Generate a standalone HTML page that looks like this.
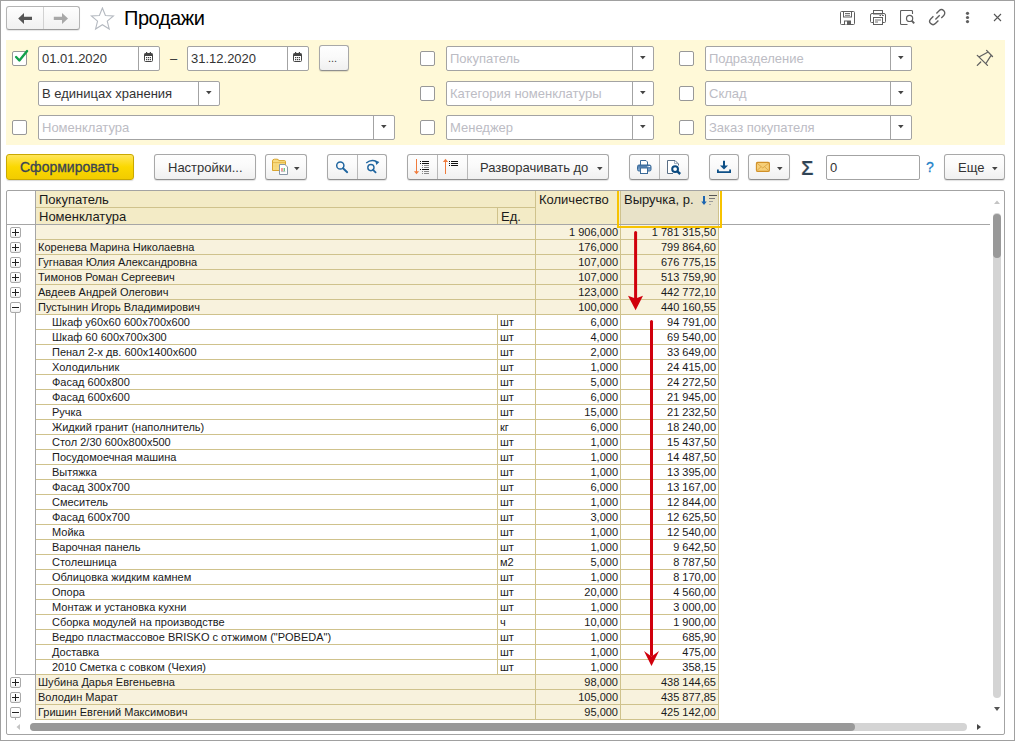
<!DOCTYPE html><html><head><meta charset="utf-8"><title>Продажи</title><style>
*{box-sizing:border-box;margin:0;padding:0}
html,body{width:1015px;height:741px;overflow:hidden;background:#fff}
body{position:relative;font-family:"Liberation Sans",sans-serif}
body>div,body>svg{position:absolute}
.t{overflow:visible}
.fld{background:#fff;border:1px solid #a3a3a3;border-radius:2px}
.chk{background:#fff;border:1px solid #989898;border-radius:2px}
.btn{background:linear-gradient(#fefefe,#fafafa 45%,#f0f0f0);border:1px solid #a8a8a8;border-bottom-color:#8f8f8f;border-radius:3px;box-shadow:0 1px 1px rgba(0,0,0,.12)}
.dd{border-left:1px solid #a3a3a3}
</style></head><body>
<div style="left:0px;top:0px;width:1015px;height:741px;border:1px solid #a0a0a0;"></div>
<div style="left:6px;top:6px;width:74px;height:24px;background:linear-gradient(#fefefe,#f1f1f1);border:1px solid #b4b4b4;border-bottom-color:#9c9c9c;border-radius:3px;box-shadow:0 1px 1px rgba(0,0,0,.1);"></div>
<div style="left:43px;top:7px;width:1px;height:22px;background:#d2d2d2;"></div>
<svg style="left:17px;top:12px" width="16" height="12" viewBox="0 0 16 12"><path d="M1.2 6.4 L7 1 V4.8 H15 V8 H7 V11.9 Z" fill="#555"/></svg>
<svg style="left:53px;top:12px" width="16" height="12" viewBox="0 0 16 12"><path d="M15 6.4 L9 1 V4.8 H0.8 V8 H9 V11.9 Z" fill="#a8a8a8"/></svg>
<svg style="left:90px;top:7px" width="25" height="24" viewBox="0 0 25 24"><path d="M12.40 1.00 L15.40 8.47 L23.43 9.02 L17.25 14.18 L19.22 21.98 L12.40 17.70 L5.58 21.98 L7.55 14.18 L1.37 9.02 L9.40 8.47 Z" fill="none" stroke="#b4b9c0" stroke-width="1.1" stroke-linejoin="miter"/></svg>
<div class="t" style="left:124px;top:8px;font-size:20px;line-height:20px;color:#000;font-weight:normal;white-space:pre;letter-spacing:-0.45px;">Продажи</div>
<svg style="left:840px;top:11px" width="15" height="15" viewBox="0 0 15 15"><path d="M1.5 0.5 H13.5 Q14.5 0.5 14.5 1.5 V12.5 Q14.5 13.5 13.5 13.5 H1.5 Q0.5 13.5 0.5 12.5 V1.5 Q0.5 0.5 1.5 0.5 Z" fill="none" stroke="#5f5f5f" stroke-width="1"/><rect x="3.5" y="0.5" width="8" height="5.5" fill="none" stroke="#5f5f5f"/><path d="M5 2.5 H10 M5 4.3 H10" stroke="#5f5f5f" stroke-width="0.9"/><rect x="4" y="9.5" width="7" height="4" fill="#5f5f5f"/><rect x="5" y="10.5" width="2" height="3" fill="#fff"/></svg>
<svg style="left:870px;top:10px" width="16" height="16" viewBox="0 0 16 16"><rect x="3.5" y="0.5" width="9" height="3.5" fill="none" stroke="#5f5f5f"/><path d="M3 12.5 H1.5 Q0.5 12.5 0.5 11.5 V5 Q0.5 3.5 2 3.5 H14 Q15.5 3.5 15.5 5 V11.5 Q15.5 12.5 14.5 12.5 H13" fill="none" stroke="#5f5f5f"/><rect x="3.5" y="7.5" width="9" height="7" fill="#fff" stroke="#5f5f5f"/><path d="M5 10 H11 M5 12 H8" stroke="#5f5f5f" stroke-width="0.9"/><path d="M9.5 5.5 H11 M12 5.5 H13.8" stroke="#5f5f5f" stroke-width="1.1"/></svg>
<svg style="left:900px;top:10px" width="16" height="16" viewBox="0 0 16 16"><path d="M7.5 14.5 H1.5 Q0.5 14.5 0.5 13.5 V1.5 Q0.5 0.5 1.5 0.5 H11.5 Q12.5 0.5 12.5 1.5 V4" fill="none" stroke="#5f5f5f" stroke-width="1.1"/><circle cx="9.6" cy="8.4" r="3.1" fill="none" stroke="#5f5f5f" stroke-width="1.2"/><path d="M11.7 10.6 L14.2 13.4" stroke="#5f5f5f" stroke-width="1.9"/></svg>
<svg style="left:926px;top:6px" width="24" height="22" viewBox="0 0 24 22"><path d="M10.4 7.4 L13.1 4.7 A3.32 3.32 0 0 1 17.8 9.4 L15.3 11.9 M13.7 9.2 L9.4 13.5 M7.4 10.2 L4.7 12.9 A3.32 3.32 0 0 0 9.4 17.6 L12.4 14.6" fill="none" stroke="#5f5f5f" stroke-width="1.35"/></svg>
<svg style="left:965px;top:11px" width="5" height="13" viewBox="0 0 5 13"><circle cx="2.5" cy="2.3" r="1.6" fill="#5f5f5f"/><circle cx="2.5" cy="6.5" r="1.6" fill="#5f5f5f"/><circle cx="2.5" cy="10.6" r="1.6" fill="#5f5f5f"/></svg>
<svg style="left:993px;top:13px" width="9" height="9" viewBox="0 0 9 9"><path d="M1 1 L8 8 M8 1 L1 8" stroke="#555" stroke-width="1.1"/></svg>
<div style="left:6px;top:40px;width:999px;height:105px;background:#fff9d8;"></div>
<div class="chk" style="left:12px;top:51px;width:15px;height:15px;"></div>
<svg style="left:12px;top:47px" width="20" height="20" viewBox="0 0 20 20"><path d="M4.1 10 L7.4 13.5 L15.1 4.1" fill="none" stroke="#12a04a" stroke-width="2.4" stroke-linecap="round" stroke-linejoin="round"/></svg>
<div class="fld" style="left:38px;top:46px;width:122px;height:25px"></div>
<div style="left:138px;top:47px;width:1px;height:23px;background:#a3a3a3;"></div>
<svg style="left:144px;top:52px" width="9" height="10" viewBox="0 0 9 10"><rect x="0.5" y="1.5" width="8" height="8" rx="1" fill="none" stroke="#444"/><rect x="0.5" y="1.5" width="8" height="2.5" fill="#444"/><rect x="2" y="0" width="1.2" height="2.2" fill="#444"/><rect x="5.8" y="0" width="1.2" height="2.2" fill="#444"/><g fill="#444"><rect x="2" y="5" width="1.2" height="1.2"/><rect x="3.9" y="5" width="1.2" height="1.2"/><rect x="5.8" y="5" width="1.2" height="1.2"/><rect x="2" y="7" width="1.2" height="1.2"/><rect x="3.9" y="7" width="1.2" height="1.2"/><rect x="5.8" y="7" width="1.2" height="1.2"/></g></svg>
<div class="t" style="left:42px;top:52px;font-size:13px;line-height:13px;color:#333;font-weight:normal;white-space:pre;">01.01.2020</div>
<div class="t" style="left:170px;top:52px;font-size:13px;line-height:13px;color:#333;font-weight:normal;white-space:pre;">–</div>
<div class="fld" style="left:187px;top:46px;width:122px;height:25px"></div>
<div style="left:287px;top:47px;width:1px;height:23px;background:#a3a3a3;"></div>
<svg style="left:293px;top:52px" width="9" height="10" viewBox="0 0 9 10"><rect x="0.5" y="1.5" width="8" height="8" rx="1" fill="none" stroke="#444"/><rect x="0.5" y="1.5" width="8" height="2.5" fill="#444"/><rect x="2" y="0" width="1.2" height="2.2" fill="#444"/><rect x="5.8" y="0" width="1.2" height="2.2" fill="#444"/><g fill="#444"><rect x="2" y="5" width="1.2" height="1.2"/><rect x="3.9" y="5" width="1.2" height="1.2"/><rect x="5.8" y="5" width="1.2" height="1.2"/><rect x="2" y="7" width="1.2" height="1.2"/><rect x="3.9" y="7" width="1.2" height="1.2"/><rect x="5.8" y="7" width="1.2" height="1.2"/></g></svg>
<div class="t" style="left:191px;top:52px;font-size:13px;line-height:13px;color:#333;font-weight:normal;white-space:pre;">31.12.2020</div>
<div class="btn" style="left:319px;top:45px;width:30px;height:26px"></div>
<div class="t" style="left:328px;top:53px;font-size:11px;line-height:11px;color:#444;font-weight:normal;white-space:pre;">...</div>
<div class="fld" style="left:38px;top:81px;width:182px;height:25px"></div>
<div style="left:198px;top:82px;width:1px;height:23px;background:#a3a3a3;"></div>
<svg style="left:206px;top:91px" width="6" height="4" viewBox="0 0 6 4"><path d="M0 0 H5.6 L2.8 3.3 Z" fill="#444"/></svg>
<div class="t" style="left:42px;top:87px;font-size:13px;line-height:13px;color:#333;font-weight:normal;white-space:pre;">В единицах хранения</div>
<div class="chk" style="left:12px;top:120px;width:15px;height:15px;"></div>
<div class="fld" style="left:38px;top:115px;width:357px;height:25px"></div>
<div style="left:373px;top:116px;width:1px;height:23px;background:#a3a3a3;"></div>
<svg style="left:381px;top:125px" width="6" height="4" viewBox="0 0 6 4"><path d="M0 0 H5.6 L2.8 3.3 Z" fill="#444"/></svg>
<div class="t" style="left:42px;top:121px;font-size:13px;line-height:13px;color:#bcbcc4;font-weight:normal;white-space:pre;">Номенклатура</div>
<div class="chk" style="left:420px;top:51px;width:15px;height:15px;"></div>
<div class="fld" style="left:446px;top:46px;width:208px;height:25px"></div>
<div style="left:632px;top:47px;width:1px;height:23px;background:#a3a3a3;"></div>
<svg style="left:640px;top:56px" width="6" height="4" viewBox="0 0 6 4"><path d="M0 0 H5.6 L2.8 3.3 Z" fill="#444"/></svg>
<div class="t" style="left:450px;top:52px;font-size:13px;line-height:13px;color:#bcbcc4;font-weight:normal;white-space:pre;">Покупатель</div>
<div class="chk" style="left:420px;top:86px;width:15px;height:15px;"></div>
<div class="fld" style="left:446px;top:81px;width:208px;height:25px"></div>
<div style="left:632px;top:82px;width:1px;height:23px;background:#a3a3a3;"></div>
<svg style="left:640px;top:91px" width="6" height="4" viewBox="0 0 6 4"><path d="M0 0 H5.6 L2.8 3.3 Z" fill="#444"/></svg>
<div class="t" style="left:450px;top:87px;font-size:13px;line-height:13px;color:#bcbcc4;font-weight:normal;white-space:pre;">Категория номенклатуры</div>
<div class="chk" style="left:420px;top:120px;width:15px;height:15px;"></div>
<div class="fld" style="left:446px;top:115px;width:208px;height:25px"></div>
<div style="left:632px;top:116px;width:1px;height:23px;background:#a3a3a3;"></div>
<svg style="left:640px;top:125px" width="6" height="4" viewBox="0 0 6 4"><path d="M0 0 H5.6 L2.8 3.3 Z" fill="#444"/></svg>
<div class="t" style="left:450px;top:121px;font-size:13px;line-height:13px;color:#bcbcc4;font-weight:normal;white-space:pre;">Менеджер</div>
<div class="chk" style="left:679px;top:51px;width:15px;height:15px;"></div>
<div class="fld" style="left:705px;top:46px;width:207px;height:25px"></div>
<div style="left:890px;top:47px;width:1px;height:23px;background:#a3a3a3;"></div>
<svg style="left:898px;top:56px" width="6" height="4" viewBox="0 0 6 4"><path d="M0 0 H5.6 L2.8 3.3 Z" fill="#444"/></svg>
<div class="t" style="left:709px;top:52px;font-size:13px;line-height:13px;color:#bcbcc4;font-weight:normal;white-space:pre;">Подразделение</div>
<div class="chk" style="left:679px;top:86px;width:15px;height:15px;"></div>
<div class="fld" style="left:705px;top:81px;width:207px;height:25px"></div>
<div style="left:890px;top:82px;width:1px;height:23px;background:#a3a3a3;"></div>
<svg style="left:898px;top:91px" width="6" height="4" viewBox="0 0 6 4"><path d="M0 0 H5.6 L2.8 3.3 Z" fill="#444"/></svg>
<div class="t" style="left:709px;top:87px;font-size:13px;line-height:13px;color:#bcbcc4;font-weight:normal;white-space:pre;">Склад</div>
<div class="chk" style="left:679px;top:120px;width:15px;height:15px;"></div>
<div class="fld" style="left:705px;top:115px;width:207px;height:25px"></div>
<div style="left:890px;top:116px;width:1px;height:23px;background:#a3a3a3;"></div>
<svg style="left:898px;top:125px" width="6" height="4" viewBox="0 0 6 4"><path d="M0 0 H5.6 L2.8 3.3 Z" fill="#444"/></svg>
<div class="t" style="left:709px;top:121px;font-size:13px;line-height:13px;color:#bcbcc4;font-weight:normal;white-space:pre;">Заказ покупателя</div>
<svg style="left:972px;top:46px" width="26" height="24" viewBox="0 0 26 24"><path d="M14.6 4.4 L20.5 10.5 M5.3 9.4 L15.5 19.4 M7.4 10.7 L15.2 6.5 M19.1 9.4 L13.9 17.5 M8.7 16 L5.3 19.4" fill="none" stroke="#616161" stroke-width="1.3" stroke-linecap="round"/></svg>
<div style="left:6px;top:154px;width:128px;height:26px;background:linear-gradient(#ffe55a,#fbd800 50%,#f2cc00);border:1px solid #c9a800;border-radius:3px;box-shadow:0 1px 1px rgba(0,0,0,.15)"></div>
<div class="t" style="left:20px;top:160px;font-size:14px;line-height:14px;color:#3a4454;font-weight:normal;white-space:pre;-webkit-text-stroke:0.3px #3a4454;">Сформировать</div>
<div class="btn" style="left:154px;top:154px;width:102px;height:26px"></div>
<div class="t" style="left:168px;top:161px;font-size:13px;line-height:13px;color:#333;font-weight:normal;white-space:pre;">Настройки...</div>
<div class="btn" style="left:265px;top:154px;width:42px;height:26px"></div>
<svg style="left:271px;top:158px" width="18" height="18" viewBox="0 0 18 18"><path d="M1.5 3 Q1.5 1.2 3.5 1.2 H6 Q7.6 1.2 7.8 2.6 H13.5 Q14.5 2.6 14.5 3.6 V12.5 H1.5 Z" fill="#f8dc80" stroke="#d9a530"/><path d="M1.8 4.6 H14.2" stroke="#e3b448" stroke-width=".9"/><path d="M2 8 H14 M5 5 V12 M9 5 V12" stroke="#f0cd70" stroke-width=".5"/><path d="M8.5 6.5 H14 L16.5 9 V16.5 H8.5 Z" fill="#fff" stroke="#8797a6"/><rect x="10.5" y="10" width="1" height="3.2" fill="#e83a3a"/><rect x="12.7" y="10" width="1" height="3.2" fill="#2fb04a"/><path d="M10 13.6 H14.3" stroke="#9a9a9a" stroke-width=".6"/></svg>
<svg style="left:294px;top:167px" width="6" height="4" viewBox="0 0 6 4"><path d="M0 0 H5.6 L2.8 3.3 Z" fill="#444"/></svg>
<div class="btn" style="left:327px;top:154px;width:60px;height:26px"></div>
<div style="left:357px;top:155px;width:1px;height:24px;background:#b8b8b8;"></div>
<svg style="left:335px;top:160px" width="14" height="14" viewBox="0 0 14 14"><circle cx="5.3" cy="5.5" r="3.6" fill="none" stroke="#2066a0" stroke-width="1.5"/><path d="M8 8.2 L12.2 12.2" stroke="#2066a0" stroke-width="1.9" stroke-linecap="round"/></svg>
<svg style="left:365px;top:159px" width="16" height="15" viewBox="0 0 16 15"><path d="M1.2 4 Q6.5 -0.2 11.6 2.8" fill="none" stroke="#2066a0" stroke-width="1.4"/><path d="M10.2 1.3 L14.4 3.1 L11.3 6 Z" fill="#2066a0"/><circle cx="5.9" cy="8.6" r="3.1" fill="none" stroke="#2066a0" stroke-width="1.4"/><path d="M8 10.8 L10.6 13.4" stroke="#2066a0" stroke-width="1.8" stroke-linecap="round"/></svg>
<div class="btn" style="left:407px;top:154px;width:202px;height:26px"></div>
<div style="left:437px;top:155px;width:1px;height:24px;background:#b8b8b8;"></div>
<div style="left:467px;top:155px;width:1px;height:24px;background:#b8b8b8;"></div>
<svg style="left:410px;top:156px" width="24" height="22" viewBox="0 0 24 22"><rect x="6" y="3" width="1" height="13" fill="#f07b3c"/><path d="M3.9 15.2 L9.1 15.2 L6.5 18.3 Z" fill="#f07b3c"/><g fill="#111"><rect x="10" y="5" width="1" height="1"/><rect x="12" y="5" width="7" height="1"/><rect x="10" y="7" width="1" height="1"/><rect x="12" y="7" width="7" height="1"/><rect x="10" y="13" width="1" height="1"/><rect x="12" y="13" width="7" height="1"/></g><g fill="#888"><rect x="12" y="9" width="1" height="1"/><rect x="14" y="9" width="5" height="1"/><rect x="12" y="11" width="1" height="1"/><rect x="14" y="11" width="5" height="1"/><rect x="12" y="15" width="1" height="1"/><rect x="14" y="15" width="5" height="1"/><rect x="12" y="17" width="1" height="1"/><rect x="14" y="17" width="5" height="1"/></g></svg>
<svg style="left:438px;top:156px" width="24" height="22" viewBox="0 0 24 22"><rect x="7" y="5.5" width="1" height="12.5" fill="#f07b3c"/><path d="M4.9 5.9 H10.1 L7.5 2.8 Z" fill="#f07b3c"/><g fill="#111"><rect x="11" y="5" width="1" height="1"/><rect x="13" y="5" width="7" height="1"/><rect x="11" y="7" width="1" height="1"/><rect x="13" y="7" width="7" height="1"/><rect x="11" y="9" width="1" height="1"/><rect x="13" y="9" width="7" height="1"/></g></svg>
<div class="t" style="left:480px;top:161px;font-size:13px;line-height:13px;color:#333;font-weight:normal;white-space:pre;">Разворачивать до</div>
<svg style="left:597px;top:167px" width="6" height="4" viewBox="0 0 6 4"><path d="M0 0 H5.6 L2.8 3.3 Z" fill="#444"/></svg>
<div class="btn" style="left:629px;top:154px;width:60px;height:26px"></div>
<div style="left:659px;top:155px;width:1px;height:24px;background:#b8b8b8;"></div>
<svg style="left:637px;top:159px" width="16" height="16" viewBox="0 0 16 16"><defs><linearGradient id="pg" x1="0" y1="0" x2="0" y2="1"><stop offset="0" stop-color="#3f70a4"/><stop offset="1" stop-color="#8db2d8"/></linearGradient></defs><path d="M3.5 6 V1.5 H9 L10.5 3 V6" fill="#fff" stroke="#3a6a98"/><rect x="0.5" y="6" width="13.5" height="6" rx="1.5" fill="url(#pg)" stroke="#3a6a98"/><rect x="3.5" y="9" width="7" height="5.5" fill="#fff" stroke="#3a6a98"/><rect x="10.6" y="7" width="1.1" height="1" fill="#fff"/><rect x="12" y="7" width="1.1" height="1" fill="#fff"/></svg>
<svg style="left:666px;top:159px" width="17" height="17" viewBox="0 0 17 17"><path d="M7 14.5 H1.5 V1.5 H9 L12.5 5 V6.5" fill="#fff" stroke="#5a6f86"/><path d="M8.5 2 V4.6 H12" fill="none" stroke="#8a9bb0" stroke-width=".8"/><circle cx="9.1" cy="10.1" r="2.9" fill="#fff" stroke="#0a4a80" stroke-width="2"/><path d="M11.1 12.2 L14.2 15" stroke="#0a4a80" stroke-width="2.4"/></svg>
<div class="btn" style="left:709px;top:154px;width:30px;height:26px"></div>
<svg style="left:716px;top:160px" width="16" height="14" viewBox="0 0 16 14"><path d="M8 0.8 V7" stroke="#0d4f86" stroke-width="2"/><path d="M4 5.6 H12 L8 9.6 Z" fill="#0d4f86"/><path d="M1.9 9.6 V12.1 H14.1 V9.6" fill="none" stroke="#0d4f86" stroke-width="1.8"/></svg>
<div class="btn" style="left:748px;top:154px;width:42px;height:26px"></div>
<svg style="left:755px;top:161px" width="16" height="12" viewBox="0 0 16 12"><rect x="1.4" y="1.4" width="13" height="9" rx="1.2" fill="#f6cf78" stroke="#d09028" stroke-width="1.1"/><path d="M1.2 1.5 L7.8 7 L14.4 1.5 M1.2 10.2 L6 5.8 M14.4 10.2 L9.6 5.8" fill="none" stroke="#d8a040" stroke-width=".8"/></svg>
<svg style="left:777px;top:167px" width="6" height="4" viewBox="0 0 6 4"><path d="M0 0 H5.6 L2.8 3.3 Z" fill="#444"/></svg>
<div class="t" style="left:801px;top:157px;font-size:21px;line-height:21px;color:#2f4355;font-weight:bold;white-space:pre;-webkit-text-stroke:0.2px #fff;">Σ</div>
<div class="fld" style="left:826px;top:155px;width:94px;height:25px"></div>
<div class="t" style="left:830px;top:161px;font-size:13px;line-height:13px;color:#333;font-weight:normal;white-space:pre;">0</div>
<div class="t" style="left:926px;top:160px;font-size:14px;line-height:14px;color:#2382c8;font-weight:normal;white-space:pre;-webkit-text-stroke:0.3px #2382c8;">?</div>
<div class="btn" style="left:944px;top:154px;width:61px;height:26px"></div>
<div class="t" style="left:958px;top:161px;font-size:13px;line-height:13px;color:#333;font-weight:normal;white-space:pre;">Еще</div>
<svg style="left:992px;top:167px" width="6" height="4" viewBox="0 0 6 4"><path d="M0 0 H5.6 L2.8 3.3 Z" fill="#444"/></svg>
<div style="left:6px;top:190px;width:999px;height:545px;border:1px solid #a3a3a3;border-radius:2px;"></div>
<div style="left:36px;top:191px;width:499px;height:33px;background:#f3ebc6;"></div>
<div style="left:536px;top:191px;width:84px;height:33px;background:#f3ebc6;"></div>
<div style="left:621px;top:191px;width:97px;height:33px;background:#e8e2c8;"></div>
<div style="left:36px;top:207px;width:499px;height:1px;background:#cfc28c;"></div>
<div style="left:497px;top:208px;width:1px;height:16px;background:#cfc28c;"></div>
<div style="left:535px;top:191px;width:1px;height:34px;background:#cfc28c;"></div>
<div style="left:620px;top:191px;width:1px;height:34px;background:#cfc28c;"></div>
<div style="left:718px;top:191px;width:1px;height:34px;background:#cfc28c;"></div>
<div class="t" style="left:39px;top:193px;font-size:13px;line-height:13px;color:#1a1a1a;font-weight:normal;white-space:pre;">Покупатель</div>
<div class="t" style="left:39px;top:210px;font-size:13px;line-height:13px;color:#1a1a1a;font-weight:normal;white-space:pre;">Номенклатура</div>
<div class="t" style="left:501px;top:210px;font-size:13px;line-height:13px;color:#1a1a1a;font-weight:normal;white-space:pre;">Ед.</div>
<div class="t" style="left:539px;top:193px;font-size:13px;line-height:13px;color:#1a1a1a;font-weight:normal;white-space:pre;">Количество</div>
<div class="t" style="left:624px;top:193px;font-size:13px;line-height:13px;color:#1a1a1a;font-weight:normal;white-space:pre;">Выручка, р.</div>
<svg style="left:700px;top:194px" width="18" height="12" viewBox="0 0 18 12"><path d="M4 2 V8" stroke="#1b64b0" stroke-width="2"/><path d="M1.3 7.6 H6.7 L4 11 Z" fill="#1b64b0"/><rect x="9" y="1" width="8" height="1" fill="#555"/><rect x="9" y="4" width="6" height="1" fill="#777"/><rect x="9" y="7" width="4" height="1" fill="#999"/><rect x="9" y="10" width="2" height="1" fill="#aaa"/></svg>
<div style="left:7px;top:224px;width:983px;height:1px;background:#a6a6a6;"></div>
<div style="left:35px;top:191px;width:1px;height:529px;background:#a6a6a6;"></div>
<div style="left:36px;top:225px;width:682px;height:14px;background:#f8f2dd;"></div>
<div style="left:36px;top:239px;width:683px;height:1px;background:#cfc28c;"></div>
<div style="left:535px;top:225px;width:1px;height:14px;background:#cfc28c;"></div>
<div style="left:620px;top:225px;width:1px;height:14px;background:#cfc28c;"></div>
<div style="left:718px;top:225px;width:1px;height:14px;background:#cfc28c;"></div>
<div style="left:10px;top:227px;width:11px;height:11px;border:1px solid #a9a9a9;border-radius:2px;background:linear-gradient(#fff 60%,#eee)"></div>
<div style="left:12px;top:232px;width:7px;height:1px;background:#222;"></div>
<div style="left:15px;top:229px;width:1px;height:7px;background:#222;"></div>
<div class="t" style="left:538px;top:227px;width:80px;text-align:right;font-size:11px;line-height:11px;color:#1a1a1a;font-weight:normal;white-space:pre;">1 906,000</div>
<div class="t" style="left:621px;top:227px;width:95px;text-align:right;font-size:11px;line-height:11px;color:#1a1a1a;font-weight:normal;white-space:pre;">1 781 315,50</div>
<div style="left:36px;top:240px;width:682px;height:14px;background:#f8f2dd;"></div>
<div style="left:36px;top:254px;width:683px;height:1px;background:#cfc28c;"></div>
<div style="left:535px;top:240px;width:1px;height:14px;background:#cfc28c;"></div>
<div style="left:620px;top:240px;width:1px;height:14px;background:#cfc28c;"></div>
<div style="left:718px;top:240px;width:1px;height:14px;background:#cfc28c;"></div>
<div class="t" style="left:38px;top:242px;font-size:11px;line-height:11px;color:#1a1a1a;font-weight:normal;white-space:pre;">Коренева Марина Николаевна</div>
<div style="left:10px;top:242px;width:11px;height:11px;border:1px solid #a9a9a9;border-radius:2px;background:linear-gradient(#fff 60%,#eee)"></div>
<div style="left:12px;top:247px;width:7px;height:1px;background:#222;"></div>
<div style="left:15px;top:244px;width:1px;height:7px;background:#222;"></div>
<div class="t" style="left:538px;top:242px;width:80px;text-align:right;font-size:11px;line-height:11px;color:#1a1a1a;font-weight:normal;white-space:pre;">176,000</div>
<div class="t" style="left:621px;top:242px;width:95px;text-align:right;font-size:11px;line-height:11px;color:#1a1a1a;font-weight:normal;white-space:pre;">799 864,60</div>
<div style="left:36px;top:255px;width:682px;height:14px;background:#f8f2dd;"></div>
<div style="left:36px;top:269px;width:683px;height:1px;background:#cfc28c;"></div>
<div style="left:535px;top:255px;width:1px;height:14px;background:#cfc28c;"></div>
<div style="left:620px;top:255px;width:1px;height:14px;background:#cfc28c;"></div>
<div style="left:718px;top:255px;width:1px;height:14px;background:#cfc28c;"></div>
<div class="t" style="left:38px;top:257px;font-size:11px;line-height:11px;color:#1a1a1a;font-weight:normal;white-space:pre;">Гугнавая Юлия Александровна</div>
<div style="left:10px;top:257px;width:11px;height:11px;border:1px solid #a9a9a9;border-radius:2px;background:linear-gradient(#fff 60%,#eee)"></div>
<div style="left:12px;top:262px;width:7px;height:1px;background:#222;"></div>
<div style="left:15px;top:259px;width:1px;height:7px;background:#222;"></div>
<div class="t" style="left:538px;top:257px;width:80px;text-align:right;font-size:11px;line-height:11px;color:#1a1a1a;font-weight:normal;white-space:pre;">107,000</div>
<div class="t" style="left:621px;top:257px;width:95px;text-align:right;font-size:11px;line-height:11px;color:#1a1a1a;font-weight:normal;white-space:pre;">676 775,15</div>
<div style="left:36px;top:270px;width:682px;height:14px;background:#f8f2dd;"></div>
<div style="left:36px;top:284px;width:683px;height:1px;background:#cfc28c;"></div>
<div style="left:535px;top:270px;width:1px;height:14px;background:#cfc28c;"></div>
<div style="left:620px;top:270px;width:1px;height:14px;background:#cfc28c;"></div>
<div style="left:718px;top:270px;width:1px;height:14px;background:#cfc28c;"></div>
<div class="t" style="left:38px;top:272px;font-size:11px;line-height:11px;color:#1a1a1a;font-weight:normal;white-space:pre;">Тимонов Роман Сергеевич</div>
<div style="left:10px;top:272px;width:11px;height:11px;border:1px solid #a9a9a9;border-radius:2px;background:linear-gradient(#fff 60%,#eee)"></div>
<div style="left:12px;top:277px;width:7px;height:1px;background:#222;"></div>
<div style="left:15px;top:274px;width:1px;height:7px;background:#222;"></div>
<div class="t" style="left:538px;top:272px;width:80px;text-align:right;font-size:11px;line-height:11px;color:#1a1a1a;font-weight:normal;white-space:pre;">107,000</div>
<div class="t" style="left:621px;top:272px;width:95px;text-align:right;font-size:11px;line-height:11px;color:#1a1a1a;font-weight:normal;white-space:pre;">513 759,90</div>
<div style="left:36px;top:285px;width:682px;height:14px;background:#f8f2dd;"></div>
<div style="left:36px;top:299px;width:683px;height:1px;background:#cfc28c;"></div>
<div style="left:535px;top:285px;width:1px;height:14px;background:#cfc28c;"></div>
<div style="left:620px;top:285px;width:1px;height:14px;background:#cfc28c;"></div>
<div style="left:718px;top:285px;width:1px;height:14px;background:#cfc28c;"></div>
<div class="t" style="left:38px;top:287px;font-size:11px;line-height:11px;color:#1a1a1a;font-weight:normal;white-space:pre;">Авдеев Андрей Олегович</div>
<div style="left:10px;top:287px;width:11px;height:11px;border:1px solid #a9a9a9;border-radius:2px;background:linear-gradient(#fff 60%,#eee)"></div>
<div style="left:12px;top:292px;width:7px;height:1px;background:#222;"></div>
<div style="left:15px;top:289px;width:1px;height:7px;background:#222;"></div>
<div class="t" style="left:538px;top:287px;width:80px;text-align:right;font-size:11px;line-height:11px;color:#1a1a1a;font-weight:normal;white-space:pre;">123,000</div>
<div class="t" style="left:621px;top:287px;width:95px;text-align:right;font-size:11px;line-height:11px;color:#1a1a1a;font-weight:normal;white-space:pre;">442 772,10</div>
<div style="left:36px;top:300px;width:682px;height:14px;background:#f8f2dd;"></div>
<div style="left:36px;top:314px;width:683px;height:1px;background:#cfc28c;"></div>
<div style="left:535px;top:300px;width:1px;height:14px;background:#cfc28c;"></div>
<div style="left:620px;top:300px;width:1px;height:14px;background:#cfc28c;"></div>
<div style="left:718px;top:300px;width:1px;height:14px;background:#cfc28c;"></div>
<div class="t" style="left:38px;top:302px;font-size:11px;line-height:11px;color:#1a1a1a;font-weight:normal;white-space:pre;">Пустынин Игорь Владимирович</div>
<div style="left:10px;top:302px;width:11px;height:11px;border:1px solid #a9a9a9;border-radius:2px;background:linear-gradient(#fff 60%,#eee)"></div>
<div style="left:12px;top:307px;width:7px;height:1px;background:#222;"></div>
<div class="t" style="left:538px;top:302px;width:80px;text-align:right;font-size:11px;line-height:11px;color:#1a1a1a;font-weight:normal;white-space:pre;">100,000</div>
<div class="t" style="left:621px;top:302px;width:95px;text-align:right;font-size:11px;line-height:11px;color:#1a1a1a;font-weight:normal;white-space:pre;">440 160,55</div>
<div style="left:36px;top:329px;width:683px;height:1px;background:#cfc28c;"></div>
<div style="left:497px;top:315px;width:1px;height:14px;background:#cfc28c;"></div>
<div style="left:535px;top:315px;width:1px;height:14px;background:#cfc28c;"></div>
<div style="left:620px;top:315px;width:1px;height:14px;background:#cfc28c;"></div>
<div style="left:718px;top:315px;width:1px;height:14px;background:#cfc28c;"></div>
<div class="t" style="left:52px;top:317px;font-size:11px;line-height:11px;color:#1a1a1a;font-weight:normal;white-space:pre;">Шкаф у60х60 600х700х600</div>
<div class="t" style="left:500px;top:317px;font-size:11px;line-height:11px;color:#1a1a1a;font-weight:normal;white-space:pre;">шт</div>
<div class="t" style="left:538px;top:317px;width:80px;text-align:right;font-size:11px;line-height:11px;color:#1a1a1a;font-weight:normal;white-space:pre;">6,000</div>
<div class="t" style="left:621px;top:317px;width:95px;text-align:right;font-size:11px;line-height:11px;color:#1a1a1a;font-weight:normal;white-space:pre;">94 791,00</div>
<div style="left:36px;top:344px;width:683px;height:1px;background:#cfc28c;"></div>
<div style="left:497px;top:330px;width:1px;height:14px;background:#cfc28c;"></div>
<div style="left:535px;top:330px;width:1px;height:14px;background:#cfc28c;"></div>
<div style="left:620px;top:330px;width:1px;height:14px;background:#cfc28c;"></div>
<div style="left:718px;top:330px;width:1px;height:14px;background:#cfc28c;"></div>
<div class="t" style="left:52px;top:332px;font-size:11px;line-height:11px;color:#1a1a1a;font-weight:normal;white-space:pre;">Шкаф 60 600х700х300</div>
<div class="t" style="left:500px;top:332px;font-size:11px;line-height:11px;color:#1a1a1a;font-weight:normal;white-space:pre;">шт</div>
<div class="t" style="left:538px;top:332px;width:80px;text-align:right;font-size:11px;line-height:11px;color:#1a1a1a;font-weight:normal;white-space:pre;">4,000</div>
<div class="t" style="left:621px;top:332px;width:95px;text-align:right;font-size:11px;line-height:11px;color:#1a1a1a;font-weight:normal;white-space:pre;">69 540,00</div>
<div style="left:36px;top:359px;width:683px;height:1px;background:#cfc28c;"></div>
<div style="left:497px;top:345px;width:1px;height:14px;background:#cfc28c;"></div>
<div style="left:535px;top:345px;width:1px;height:14px;background:#cfc28c;"></div>
<div style="left:620px;top:345px;width:1px;height:14px;background:#cfc28c;"></div>
<div style="left:718px;top:345px;width:1px;height:14px;background:#cfc28c;"></div>
<div class="t" style="left:52px;top:347px;font-size:11px;line-height:11px;color:#1a1a1a;font-weight:normal;white-space:pre;">Пенал 2-х дв. 600х1400х600</div>
<div class="t" style="left:500px;top:347px;font-size:11px;line-height:11px;color:#1a1a1a;font-weight:normal;white-space:pre;">шт</div>
<div class="t" style="left:538px;top:347px;width:80px;text-align:right;font-size:11px;line-height:11px;color:#1a1a1a;font-weight:normal;white-space:pre;">2,000</div>
<div class="t" style="left:621px;top:347px;width:95px;text-align:right;font-size:11px;line-height:11px;color:#1a1a1a;font-weight:normal;white-space:pre;">33 649,00</div>
<div style="left:36px;top:374px;width:683px;height:1px;background:#cfc28c;"></div>
<div style="left:497px;top:360px;width:1px;height:14px;background:#cfc28c;"></div>
<div style="left:535px;top:360px;width:1px;height:14px;background:#cfc28c;"></div>
<div style="left:620px;top:360px;width:1px;height:14px;background:#cfc28c;"></div>
<div style="left:718px;top:360px;width:1px;height:14px;background:#cfc28c;"></div>
<div class="t" style="left:52px;top:362px;font-size:11px;line-height:11px;color:#1a1a1a;font-weight:normal;white-space:pre;">Холодильник</div>
<div class="t" style="left:500px;top:362px;font-size:11px;line-height:11px;color:#1a1a1a;font-weight:normal;white-space:pre;">шт</div>
<div class="t" style="left:538px;top:362px;width:80px;text-align:right;font-size:11px;line-height:11px;color:#1a1a1a;font-weight:normal;white-space:pre;">1,000</div>
<div class="t" style="left:621px;top:362px;width:95px;text-align:right;font-size:11px;line-height:11px;color:#1a1a1a;font-weight:normal;white-space:pre;">24 415,00</div>
<div style="left:36px;top:389px;width:683px;height:1px;background:#cfc28c;"></div>
<div style="left:497px;top:375px;width:1px;height:14px;background:#cfc28c;"></div>
<div style="left:535px;top:375px;width:1px;height:14px;background:#cfc28c;"></div>
<div style="left:620px;top:375px;width:1px;height:14px;background:#cfc28c;"></div>
<div style="left:718px;top:375px;width:1px;height:14px;background:#cfc28c;"></div>
<div class="t" style="left:52px;top:377px;font-size:11px;line-height:11px;color:#1a1a1a;font-weight:normal;white-space:pre;">Фасад 600х800</div>
<div class="t" style="left:500px;top:377px;font-size:11px;line-height:11px;color:#1a1a1a;font-weight:normal;white-space:pre;">шт</div>
<div class="t" style="left:538px;top:377px;width:80px;text-align:right;font-size:11px;line-height:11px;color:#1a1a1a;font-weight:normal;white-space:pre;">5,000</div>
<div class="t" style="left:621px;top:377px;width:95px;text-align:right;font-size:11px;line-height:11px;color:#1a1a1a;font-weight:normal;white-space:pre;">24 272,50</div>
<div style="left:36px;top:404px;width:683px;height:1px;background:#cfc28c;"></div>
<div style="left:497px;top:390px;width:1px;height:14px;background:#cfc28c;"></div>
<div style="left:535px;top:390px;width:1px;height:14px;background:#cfc28c;"></div>
<div style="left:620px;top:390px;width:1px;height:14px;background:#cfc28c;"></div>
<div style="left:718px;top:390px;width:1px;height:14px;background:#cfc28c;"></div>
<div class="t" style="left:52px;top:392px;font-size:11px;line-height:11px;color:#1a1a1a;font-weight:normal;white-space:pre;">Фасад 600х600</div>
<div class="t" style="left:500px;top:392px;font-size:11px;line-height:11px;color:#1a1a1a;font-weight:normal;white-space:pre;">шт</div>
<div class="t" style="left:538px;top:392px;width:80px;text-align:right;font-size:11px;line-height:11px;color:#1a1a1a;font-weight:normal;white-space:pre;">6,000</div>
<div class="t" style="left:621px;top:392px;width:95px;text-align:right;font-size:11px;line-height:11px;color:#1a1a1a;font-weight:normal;white-space:pre;">21 945,00</div>
<div style="left:36px;top:419px;width:683px;height:1px;background:#cfc28c;"></div>
<div style="left:497px;top:405px;width:1px;height:14px;background:#cfc28c;"></div>
<div style="left:535px;top:405px;width:1px;height:14px;background:#cfc28c;"></div>
<div style="left:620px;top:405px;width:1px;height:14px;background:#cfc28c;"></div>
<div style="left:718px;top:405px;width:1px;height:14px;background:#cfc28c;"></div>
<div class="t" style="left:52px;top:407px;font-size:11px;line-height:11px;color:#1a1a1a;font-weight:normal;white-space:pre;">Ручка</div>
<div class="t" style="left:500px;top:407px;font-size:11px;line-height:11px;color:#1a1a1a;font-weight:normal;white-space:pre;">шт</div>
<div class="t" style="left:538px;top:407px;width:80px;text-align:right;font-size:11px;line-height:11px;color:#1a1a1a;font-weight:normal;white-space:pre;">15,000</div>
<div class="t" style="left:621px;top:407px;width:95px;text-align:right;font-size:11px;line-height:11px;color:#1a1a1a;font-weight:normal;white-space:pre;">21 232,50</div>
<div style="left:36px;top:434px;width:683px;height:1px;background:#cfc28c;"></div>
<div style="left:497px;top:420px;width:1px;height:14px;background:#cfc28c;"></div>
<div style="left:535px;top:420px;width:1px;height:14px;background:#cfc28c;"></div>
<div style="left:620px;top:420px;width:1px;height:14px;background:#cfc28c;"></div>
<div style="left:718px;top:420px;width:1px;height:14px;background:#cfc28c;"></div>
<div class="t" style="left:52px;top:422px;font-size:11px;line-height:11px;color:#1a1a1a;font-weight:normal;white-space:pre;">Жидкий гранит (наполнитель)</div>
<div class="t" style="left:500px;top:422px;font-size:11px;line-height:11px;color:#1a1a1a;font-weight:normal;white-space:pre;">кг</div>
<div class="t" style="left:538px;top:422px;width:80px;text-align:right;font-size:11px;line-height:11px;color:#1a1a1a;font-weight:normal;white-space:pre;">6,000</div>
<div class="t" style="left:621px;top:422px;width:95px;text-align:right;font-size:11px;line-height:11px;color:#1a1a1a;font-weight:normal;white-space:pre;">18 240,00</div>
<div style="left:36px;top:449px;width:683px;height:1px;background:#cfc28c;"></div>
<div style="left:497px;top:435px;width:1px;height:14px;background:#cfc28c;"></div>
<div style="left:535px;top:435px;width:1px;height:14px;background:#cfc28c;"></div>
<div style="left:620px;top:435px;width:1px;height:14px;background:#cfc28c;"></div>
<div style="left:718px;top:435px;width:1px;height:14px;background:#cfc28c;"></div>
<div class="t" style="left:52px;top:437px;font-size:11px;line-height:11px;color:#1a1a1a;font-weight:normal;white-space:pre;">Стол 2/30 600х800х500</div>
<div class="t" style="left:500px;top:437px;font-size:11px;line-height:11px;color:#1a1a1a;font-weight:normal;white-space:pre;">шт</div>
<div class="t" style="left:538px;top:437px;width:80px;text-align:right;font-size:11px;line-height:11px;color:#1a1a1a;font-weight:normal;white-space:pre;">1,000</div>
<div class="t" style="left:621px;top:437px;width:95px;text-align:right;font-size:11px;line-height:11px;color:#1a1a1a;font-weight:normal;white-space:pre;">15 437,50</div>
<div style="left:36px;top:464px;width:683px;height:1px;background:#cfc28c;"></div>
<div style="left:497px;top:450px;width:1px;height:14px;background:#cfc28c;"></div>
<div style="left:535px;top:450px;width:1px;height:14px;background:#cfc28c;"></div>
<div style="left:620px;top:450px;width:1px;height:14px;background:#cfc28c;"></div>
<div style="left:718px;top:450px;width:1px;height:14px;background:#cfc28c;"></div>
<div class="t" style="left:52px;top:452px;font-size:11px;line-height:11px;color:#1a1a1a;font-weight:normal;white-space:pre;">Посудомоечная машина</div>
<div class="t" style="left:500px;top:452px;font-size:11px;line-height:11px;color:#1a1a1a;font-weight:normal;white-space:pre;">шт</div>
<div class="t" style="left:538px;top:452px;width:80px;text-align:right;font-size:11px;line-height:11px;color:#1a1a1a;font-weight:normal;white-space:pre;">1,000</div>
<div class="t" style="left:621px;top:452px;width:95px;text-align:right;font-size:11px;line-height:11px;color:#1a1a1a;font-weight:normal;white-space:pre;">14 487,50</div>
<div style="left:36px;top:479px;width:683px;height:1px;background:#cfc28c;"></div>
<div style="left:497px;top:465px;width:1px;height:14px;background:#cfc28c;"></div>
<div style="left:535px;top:465px;width:1px;height:14px;background:#cfc28c;"></div>
<div style="left:620px;top:465px;width:1px;height:14px;background:#cfc28c;"></div>
<div style="left:718px;top:465px;width:1px;height:14px;background:#cfc28c;"></div>
<div class="t" style="left:52px;top:467px;font-size:11px;line-height:11px;color:#1a1a1a;font-weight:normal;white-space:pre;">Вытяжка</div>
<div class="t" style="left:500px;top:467px;font-size:11px;line-height:11px;color:#1a1a1a;font-weight:normal;white-space:pre;">шт</div>
<div class="t" style="left:538px;top:467px;width:80px;text-align:right;font-size:11px;line-height:11px;color:#1a1a1a;font-weight:normal;white-space:pre;">1,000</div>
<div class="t" style="left:621px;top:467px;width:95px;text-align:right;font-size:11px;line-height:11px;color:#1a1a1a;font-weight:normal;white-space:pre;">13 395,00</div>
<div style="left:36px;top:494px;width:683px;height:1px;background:#cfc28c;"></div>
<div style="left:497px;top:480px;width:1px;height:14px;background:#cfc28c;"></div>
<div style="left:535px;top:480px;width:1px;height:14px;background:#cfc28c;"></div>
<div style="left:620px;top:480px;width:1px;height:14px;background:#cfc28c;"></div>
<div style="left:718px;top:480px;width:1px;height:14px;background:#cfc28c;"></div>
<div class="t" style="left:52px;top:482px;font-size:11px;line-height:11px;color:#1a1a1a;font-weight:normal;white-space:pre;">Фасад 300х700</div>
<div class="t" style="left:500px;top:482px;font-size:11px;line-height:11px;color:#1a1a1a;font-weight:normal;white-space:pre;">шт</div>
<div class="t" style="left:538px;top:482px;width:80px;text-align:right;font-size:11px;line-height:11px;color:#1a1a1a;font-weight:normal;white-space:pre;">6,000</div>
<div class="t" style="left:621px;top:482px;width:95px;text-align:right;font-size:11px;line-height:11px;color:#1a1a1a;font-weight:normal;white-space:pre;">13 167,00</div>
<div style="left:36px;top:509px;width:683px;height:1px;background:#cfc28c;"></div>
<div style="left:497px;top:495px;width:1px;height:14px;background:#cfc28c;"></div>
<div style="left:535px;top:495px;width:1px;height:14px;background:#cfc28c;"></div>
<div style="left:620px;top:495px;width:1px;height:14px;background:#cfc28c;"></div>
<div style="left:718px;top:495px;width:1px;height:14px;background:#cfc28c;"></div>
<div class="t" style="left:52px;top:497px;font-size:11px;line-height:11px;color:#1a1a1a;font-weight:normal;white-space:pre;">Смеситель</div>
<div class="t" style="left:500px;top:497px;font-size:11px;line-height:11px;color:#1a1a1a;font-weight:normal;white-space:pre;">шт</div>
<div class="t" style="left:538px;top:497px;width:80px;text-align:right;font-size:11px;line-height:11px;color:#1a1a1a;font-weight:normal;white-space:pre;">1,000</div>
<div class="t" style="left:621px;top:497px;width:95px;text-align:right;font-size:11px;line-height:11px;color:#1a1a1a;font-weight:normal;white-space:pre;">12 844,00</div>
<div style="left:36px;top:524px;width:683px;height:1px;background:#cfc28c;"></div>
<div style="left:497px;top:510px;width:1px;height:14px;background:#cfc28c;"></div>
<div style="left:535px;top:510px;width:1px;height:14px;background:#cfc28c;"></div>
<div style="left:620px;top:510px;width:1px;height:14px;background:#cfc28c;"></div>
<div style="left:718px;top:510px;width:1px;height:14px;background:#cfc28c;"></div>
<div class="t" style="left:52px;top:512px;font-size:11px;line-height:11px;color:#1a1a1a;font-weight:normal;white-space:pre;">Фасад 600х700</div>
<div class="t" style="left:500px;top:512px;font-size:11px;line-height:11px;color:#1a1a1a;font-weight:normal;white-space:pre;">шт</div>
<div class="t" style="left:538px;top:512px;width:80px;text-align:right;font-size:11px;line-height:11px;color:#1a1a1a;font-weight:normal;white-space:pre;">3,000</div>
<div class="t" style="left:621px;top:512px;width:95px;text-align:right;font-size:11px;line-height:11px;color:#1a1a1a;font-weight:normal;white-space:pre;">12 625,50</div>
<div style="left:36px;top:539px;width:683px;height:1px;background:#cfc28c;"></div>
<div style="left:497px;top:525px;width:1px;height:14px;background:#cfc28c;"></div>
<div style="left:535px;top:525px;width:1px;height:14px;background:#cfc28c;"></div>
<div style="left:620px;top:525px;width:1px;height:14px;background:#cfc28c;"></div>
<div style="left:718px;top:525px;width:1px;height:14px;background:#cfc28c;"></div>
<div class="t" style="left:52px;top:527px;font-size:11px;line-height:11px;color:#1a1a1a;font-weight:normal;white-space:pre;">Мойка</div>
<div class="t" style="left:500px;top:527px;font-size:11px;line-height:11px;color:#1a1a1a;font-weight:normal;white-space:pre;">шт</div>
<div class="t" style="left:538px;top:527px;width:80px;text-align:right;font-size:11px;line-height:11px;color:#1a1a1a;font-weight:normal;white-space:pre;">1,000</div>
<div class="t" style="left:621px;top:527px;width:95px;text-align:right;font-size:11px;line-height:11px;color:#1a1a1a;font-weight:normal;white-space:pre;">12 540,00</div>
<div style="left:36px;top:554px;width:683px;height:1px;background:#cfc28c;"></div>
<div style="left:497px;top:540px;width:1px;height:14px;background:#cfc28c;"></div>
<div style="left:535px;top:540px;width:1px;height:14px;background:#cfc28c;"></div>
<div style="left:620px;top:540px;width:1px;height:14px;background:#cfc28c;"></div>
<div style="left:718px;top:540px;width:1px;height:14px;background:#cfc28c;"></div>
<div class="t" style="left:52px;top:542px;font-size:11px;line-height:11px;color:#1a1a1a;font-weight:normal;white-space:pre;">Варочная панель</div>
<div class="t" style="left:500px;top:542px;font-size:11px;line-height:11px;color:#1a1a1a;font-weight:normal;white-space:pre;">шт</div>
<div class="t" style="left:538px;top:542px;width:80px;text-align:right;font-size:11px;line-height:11px;color:#1a1a1a;font-weight:normal;white-space:pre;">1,000</div>
<div class="t" style="left:621px;top:542px;width:95px;text-align:right;font-size:11px;line-height:11px;color:#1a1a1a;font-weight:normal;white-space:pre;">9 642,50</div>
<div style="left:36px;top:569px;width:683px;height:1px;background:#cfc28c;"></div>
<div style="left:497px;top:555px;width:1px;height:14px;background:#cfc28c;"></div>
<div style="left:535px;top:555px;width:1px;height:14px;background:#cfc28c;"></div>
<div style="left:620px;top:555px;width:1px;height:14px;background:#cfc28c;"></div>
<div style="left:718px;top:555px;width:1px;height:14px;background:#cfc28c;"></div>
<div class="t" style="left:52px;top:557px;font-size:11px;line-height:11px;color:#1a1a1a;font-weight:normal;white-space:pre;">Столешница</div>
<div class="t" style="left:500px;top:557px;font-size:11px;line-height:11px;color:#1a1a1a;font-weight:normal;white-space:pre;">м2</div>
<div class="t" style="left:538px;top:557px;width:80px;text-align:right;font-size:11px;line-height:11px;color:#1a1a1a;font-weight:normal;white-space:pre;">5,000</div>
<div class="t" style="left:621px;top:557px;width:95px;text-align:right;font-size:11px;line-height:11px;color:#1a1a1a;font-weight:normal;white-space:pre;">8 787,50</div>
<div style="left:36px;top:584px;width:683px;height:1px;background:#cfc28c;"></div>
<div style="left:497px;top:570px;width:1px;height:14px;background:#cfc28c;"></div>
<div style="left:535px;top:570px;width:1px;height:14px;background:#cfc28c;"></div>
<div style="left:620px;top:570px;width:1px;height:14px;background:#cfc28c;"></div>
<div style="left:718px;top:570px;width:1px;height:14px;background:#cfc28c;"></div>
<div class="t" style="left:52px;top:572px;font-size:11px;line-height:11px;color:#1a1a1a;font-weight:normal;white-space:pre;">Облицовка жидким камнем</div>
<div class="t" style="left:500px;top:572px;font-size:11px;line-height:11px;color:#1a1a1a;font-weight:normal;white-space:pre;">шт</div>
<div class="t" style="left:538px;top:572px;width:80px;text-align:right;font-size:11px;line-height:11px;color:#1a1a1a;font-weight:normal;white-space:pre;">1,000</div>
<div class="t" style="left:621px;top:572px;width:95px;text-align:right;font-size:11px;line-height:11px;color:#1a1a1a;font-weight:normal;white-space:pre;">8 170,00</div>
<div style="left:36px;top:599px;width:683px;height:1px;background:#cfc28c;"></div>
<div style="left:497px;top:585px;width:1px;height:14px;background:#cfc28c;"></div>
<div style="left:535px;top:585px;width:1px;height:14px;background:#cfc28c;"></div>
<div style="left:620px;top:585px;width:1px;height:14px;background:#cfc28c;"></div>
<div style="left:718px;top:585px;width:1px;height:14px;background:#cfc28c;"></div>
<div class="t" style="left:52px;top:587px;font-size:11px;line-height:11px;color:#1a1a1a;font-weight:normal;white-space:pre;">Опора</div>
<div class="t" style="left:500px;top:587px;font-size:11px;line-height:11px;color:#1a1a1a;font-weight:normal;white-space:pre;">шт</div>
<div class="t" style="left:538px;top:587px;width:80px;text-align:right;font-size:11px;line-height:11px;color:#1a1a1a;font-weight:normal;white-space:pre;">20,000</div>
<div class="t" style="left:621px;top:587px;width:95px;text-align:right;font-size:11px;line-height:11px;color:#1a1a1a;font-weight:normal;white-space:pre;">4 560,00</div>
<div style="left:36px;top:614px;width:683px;height:1px;background:#cfc28c;"></div>
<div style="left:497px;top:600px;width:1px;height:14px;background:#cfc28c;"></div>
<div style="left:535px;top:600px;width:1px;height:14px;background:#cfc28c;"></div>
<div style="left:620px;top:600px;width:1px;height:14px;background:#cfc28c;"></div>
<div style="left:718px;top:600px;width:1px;height:14px;background:#cfc28c;"></div>
<div class="t" style="left:52px;top:602px;font-size:11px;line-height:11px;color:#1a1a1a;font-weight:normal;white-space:pre;">Монтаж и установка кухни</div>
<div class="t" style="left:500px;top:602px;font-size:11px;line-height:11px;color:#1a1a1a;font-weight:normal;white-space:pre;">шт</div>
<div class="t" style="left:538px;top:602px;width:80px;text-align:right;font-size:11px;line-height:11px;color:#1a1a1a;font-weight:normal;white-space:pre;">1,000</div>
<div class="t" style="left:621px;top:602px;width:95px;text-align:right;font-size:11px;line-height:11px;color:#1a1a1a;font-weight:normal;white-space:pre;">3 000,00</div>
<div style="left:36px;top:629px;width:683px;height:1px;background:#cfc28c;"></div>
<div style="left:497px;top:615px;width:1px;height:14px;background:#cfc28c;"></div>
<div style="left:535px;top:615px;width:1px;height:14px;background:#cfc28c;"></div>
<div style="left:620px;top:615px;width:1px;height:14px;background:#cfc28c;"></div>
<div style="left:718px;top:615px;width:1px;height:14px;background:#cfc28c;"></div>
<div class="t" style="left:52px;top:617px;font-size:11px;line-height:11px;color:#1a1a1a;font-weight:normal;white-space:pre;">Сборка модулей на производстве</div>
<div class="t" style="left:500px;top:617px;font-size:11px;line-height:11px;color:#1a1a1a;font-weight:normal;white-space:pre;">ч</div>
<div class="t" style="left:538px;top:617px;width:80px;text-align:right;font-size:11px;line-height:11px;color:#1a1a1a;font-weight:normal;white-space:pre;">10,000</div>
<div class="t" style="left:621px;top:617px;width:95px;text-align:right;font-size:11px;line-height:11px;color:#1a1a1a;font-weight:normal;white-space:pre;">1 900,00</div>
<div style="left:36px;top:644px;width:683px;height:1px;background:#cfc28c;"></div>
<div style="left:497px;top:630px;width:1px;height:14px;background:#cfc28c;"></div>
<div style="left:535px;top:630px;width:1px;height:14px;background:#cfc28c;"></div>
<div style="left:620px;top:630px;width:1px;height:14px;background:#cfc28c;"></div>
<div style="left:718px;top:630px;width:1px;height:14px;background:#cfc28c;"></div>
<div class="t" style="left:52px;top:632px;font-size:11px;line-height:11px;color:#1a1a1a;font-weight:normal;white-space:pre;">Ведро пластмассовое BRISKO с отжимом (&quot;POBEDA&quot;)</div>
<div class="t" style="left:500px;top:632px;font-size:11px;line-height:11px;color:#1a1a1a;font-weight:normal;white-space:pre;">шт</div>
<div class="t" style="left:538px;top:632px;width:80px;text-align:right;font-size:11px;line-height:11px;color:#1a1a1a;font-weight:normal;white-space:pre;">1,000</div>
<div class="t" style="left:621px;top:632px;width:95px;text-align:right;font-size:11px;line-height:11px;color:#1a1a1a;font-weight:normal;white-space:pre;">685,90</div>
<div style="left:36px;top:659px;width:683px;height:1px;background:#cfc28c;"></div>
<div style="left:497px;top:645px;width:1px;height:14px;background:#cfc28c;"></div>
<div style="left:535px;top:645px;width:1px;height:14px;background:#cfc28c;"></div>
<div style="left:620px;top:645px;width:1px;height:14px;background:#cfc28c;"></div>
<div style="left:718px;top:645px;width:1px;height:14px;background:#cfc28c;"></div>
<div class="t" style="left:52px;top:647px;font-size:11px;line-height:11px;color:#1a1a1a;font-weight:normal;white-space:pre;">Доставка</div>
<div class="t" style="left:500px;top:647px;font-size:11px;line-height:11px;color:#1a1a1a;font-weight:normal;white-space:pre;">шт</div>
<div class="t" style="left:538px;top:647px;width:80px;text-align:right;font-size:11px;line-height:11px;color:#1a1a1a;font-weight:normal;white-space:pre;">1,000</div>
<div class="t" style="left:621px;top:647px;width:95px;text-align:right;font-size:11px;line-height:11px;color:#1a1a1a;font-weight:normal;white-space:pre;">475,00</div>
<div style="left:36px;top:674px;width:683px;height:1px;background:#cfc28c;"></div>
<div style="left:497px;top:660px;width:1px;height:14px;background:#cfc28c;"></div>
<div style="left:535px;top:660px;width:1px;height:14px;background:#cfc28c;"></div>
<div style="left:620px;top:660px;width:1px;height:14px;background:#cfc28c;"></div>
<div style="left:718px;top:660px;width:1px;height:14px;background:#cfc28c;"></div>
<div class="t" style="left:52px;top:662px;font-size:11px;line-height:11px;color:#1a1a1a;font-weight:normal;white-space:pre;">2010 Сметка с совком (Чехия)</div>
<div class="t" style="left:500px;top:662px;font-size:11px;line-height:11px;color:#1a1a1a;font-weight:normal;white-space:pre;">шт</div>
<div class="t" style="left:538px;top:662px;width:80px;text-align:right;font-size:11px;line-height:11px;color:#1a1a1a;font-weight:normal;white-space:pre;">1,000</div>
<div class="t" style="left:621px;top:662px;width:95px;text-align:right;font-size:11px;line-height:11px;color:#1a1a1a;font-weight:normal;white-space:pre;">358,15</div>
<div style="left:36px;top:675px;width:682px;height:14px;background:#f8f2dd;"></div>
<div style="left:36px;top:689px;width:683px;height:1px;background:#cfc28c;"></div>
<div style="left:535px;top:675px;width:1px;height:14px;background:#cfc28c;"></div>
<div style="left:620px;top:675px;width:1px;height:14px;background:#cfc28c;"></div>
<div style="left:718px;top:675px;width:1px;height:14px;background:#cfc28c;"></div>
<div class="t" style="left:38px;top:677px;font-size:11px;line-height:11px;color:#1a1a1a;font-weight:normal;white-space:pre;">Шубина Дарья Евгеньевна</div>
<div style="left:10px;top:677px;width:11px;height:11px;border:1px solid #a9a9a9;border-radius:2px;background:linear-gradient(#fff 60%,#eee)"></div>
<div style="left:12px;top:682px;width:7px;height:1px;background:#222;"></div>
<div style="left:15px;top:679px;width:1px;height:7px;background:#222;"></div>
<div class="t" style="left:538px;top:677px;width:80px;text-align:right;font-size:11px;line-height:11px;color:#1a1a1a;font-weight:normal;white-space:pre;">98,000</div>
<div class="t" style="left:621px;top:677px;width:95px;text-align:right;font-size:11px;line-height:11px;color:#1a1a1a;font-weight:normal;white-space:pre;">438 144,65</div>
<div style="left:36px;top:690px;width:682px;height:14px;background:#f8f2dd;"></div>
<div style="left:36px;top:704px;width:683px;height:1px;background:#cfc28c;"></div>
<div style="left:535px;top:690px;width:1px;height:14px;background:#cfc28c;"></div>
<div style="left:620px;top:690px;width:1px;height:14px;background:#cfc28c;"></div>
<div style="left:718px;top:690px;width:1px;height:14px;background:#cfc28c;"></div>
<div class="t" style="left:38px;top:692px;font-size:11px;line-height:11px;color:#1a1a1a;font-weight:normal;white-space:pre;">Володин Марат</div>
<div style="left:10px;top:692px;width:11px;height:11px;border:1px solid #a9a9a9;border-radius:2px;background:linear-gradient(#fff 60%,#eee)"></div>
<div style="left:12px;top:697px;width:7px;height:1px;background:#222;"></div>
<div style="left:15px;top:694px;width:1px;height:7px;background:#222;"></div>
<div class="t" style="left:538px;top:692px;width:80px;text-align:right;font-size:11px;line-height:11px;color:#1a1a1a;font-weight:normal;white-space:pre;">105,000</div>
<div class="t" style="left:621px;top:692px;width:95px;text-align:right;font-size:11px;line-height:11px;color:#1a1a1a;font-weight:normal;white-space:pre;">435 877,85</div>
<div style="left:36px;top:705px;width:682px;height:14px;background:#f8f2dd;"></div>
<div style="left:36px;top:719px;width:683px;height:1px;background:#cfc28c;"></div>
<div style="left:535px;top:705px;width:1px;height:14px;background:#cfc28c;"></div>
<div style="left:620px;top:705px;width:1px;height:14px;background:#cfc28c;"></div>
<div style="left:718px;top:705px;width:1px;height:14px;background:#cfc28c;"></div>
<div class="t" style="left:38px;top:707px;font-size:11px;line-height:11px;color:#1a1a1a;font-weight:normal;white-space:pre;">Гришин Евгений Максимович</div>
<div style="left:10px;top:707px;width:11px;height:11px;border:1px solid #a9a9a9;border-radius:2px;background:linear-gradient(#fff 60%,#eee)"></div>
<div style="left:12px;top:712px;width:7px;height:1px;background:#222;"></div>
<div class="t" style="left:538px;top:707px;width:80px;text-align:right;font-size:11px;line-height:11px;color:#1a1a1a;font-weight:normal;white-space:pre;">95,000</div>
<div class="t" style="left:621px;top:707px;width:95px;text-align:right;font-size:11px;line-height:11px;color:#1a1a1a;font-weight:normal;white-space:pre;">425 142,00</div>
<div style="left:15px;top:313px;width:1px;height:362px;background:#a9a9a9;"></div>
<div style="left:15px;top:674px;width:20px;height:1px;background:#a9a9a9;"></div>
<div style="left:15px;top:718px;width:1px;height:2px;background:#a9a9a9;"></div>
<div style="left:617px;top:191px;width:2px;height:37px;background:#f7c300;"></div>
<div style="left:720px;top:191px;width:2px;height:37px;background:#f7c300;"></div>
<div style="left:617px;top:226px;width:105px;height:2px;background:#f7c300;"></div>
<svg style="left:626px;top:230px" width="20" height="82" viewBox="0 0 20 82"><path d="M9.6 2.6 V70" stroke="#d0000c" stroke-width="3" stroke-linecap="round"/><path d="M2 65.7 L9.6 68.6 L17 65.7 L9.6 80.3 Z" fill="#d0000c"/></svg>
<svg style="left:642px;top:320px" width="20" height="349" viewBox="0 0 20 349"><path d="M9.5 1.6 V335" stroke="#d0000c" stroke-width="3" stroke-linecap="round"/><path d="M2 331 L9.5 336.4 L17 331 L9.5 346.1 Z" fill="#d0000c"/></svg>
<svg style="left:993px;top:199px" width="8" height="6" viewBox="0 0 8 6"><path d="M1 5 H7 L4 1.5 Z" fill="#c4c4c4"/></svg>
<div style="left:993px;top:213px;width:8px;height:485px;background:#d4d4d4;border-radius:4px;"></div>
<div style="left:993px;top:214px;width:8px;height:44px;background:#999;border-radius:4px;"></div>
<svg style="left:993px;top:706px" width="8" height="6" viewBox="0 0 8 6"><path d="M1 1 H7 L4 5 Z" fill="#555"/></svg>
<svg style="left:15px;top:723px" width="6" height="8" viewBox="0 0 6 8"><path d="M5 1 V7 L1.5 4 Z" fill="#c4c4c4"/></svg>
<div style="left:30px;top:723px;width:937px;height:8px;background:#d4d4d4;border-radius:4px;"></div>
<div style="left:30px;top:723px;width:825px;height:8px;background:#999;border-radius:4px;"></div>
<svg style="left:976px;top:723px" width="6" height="8" viewBox="0 0 6 8"><path d="M1 1 V7 L5 4 Z" fill="#444"/></svg>
</body></html>
